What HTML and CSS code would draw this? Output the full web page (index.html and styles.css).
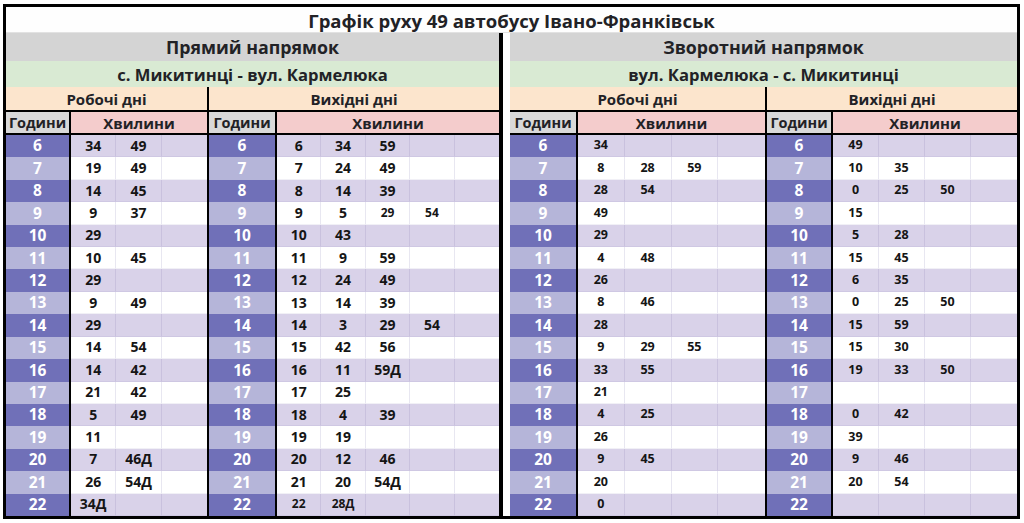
FILE: index.html
```html
<!DOCTYPE html>
<html lang="uk">
<head>
<meta charset="utf-8">
<title>Графік руху 49 автобусу Івано-Франківськ</title>
<link rel="stylesheet" href="styles.css">
</head>
<body>
<div class="sheet">
  <div class="title">Графік руху 49 автобусу Івано-Франківськ</div>
  <div class="panels">
    <section class="panel left">
      <div class="dir">Прямий напрямок</div>
      <div class="route">с. Микитинці - вул. Кармелюка</div>
      <div class="halves">
        <div class="half ha">
          <div class="days">Робочі дні</div>
          <div class="head"><div class="hh">Години</div><div class="mh">Хвилини</div></div>
          <div class="body">
            <div class="r"><span class="h">6</span><span>34</span><span>49</span><span></span></div>
            <div class="r"><span class="h">7</span><span>19</span><span>49</span><span></span></div>
            <div class="r"><span class="h">8</span><span>14</span><span>45</span><span></span></div>
            <div class="r"><span class="h">9</span><span>9</span><span>37</span><span></span></div>
            <div class="r"><span class="h">10</span><span>29</span><span></span><span></span></div>
            <div class="r"><span class="h">11</span><span>10</span><span>45</span><span></span></div>
            <div class="r"><span class="h">12</span><span>29</span><span></span><span></span></div>
            <div class="r"><span class="h">13</span><span>9</span><span>49</span><span></span></div>
            <div class="r"><span class="h">14</span><span>29</span><span></span><span></span></div>
            <div class="r"><span class="h">15</span><span>14</span><span>54</span><span></span></div>
            <div class="r"><span class="h">16</span><span>14</span><span>42</span><span></span></div>
            <div class="r"><span class="h">17</span><span>21</span><span>42</span><span></span></div>
            <div class="r"><span class="h">18</span><span>5</span><span>49</span><span></span></div>
            <div class="r"><span class="h">19</span><span>11</span><span></span><span></span></div>
            <div class="r"><span class="h">20</span><span>7</span><span>46Д</span><span></span></div>
            <div class="r"><span class="h">21</span><span>26</span><span>54Д</span><span></span></div>
            <div class="r"><span class="h">22</span><span>34Д</span><span></span><span></span></div>
          </div>
        </div>
        <div class="half hb">
          <div class="days">Вихідні дні</div>
          <div class="head"><div class="hh">Години</div><div class="mh">Хвилини</div></div>
          <div class="body">
            <div class="r"><span class="h">6</span><span>6</span><span>34</span><span>59</span><span></span><span></span></div>
            <div class="r"><span class="h">7</span><span>7</span><span>24</span><span>49</span><span></span><span></span></div>
            <div class="r"><span class="h">8</span><span>8</span><span>14</span><span>39</span><span></span><span></span></div>
            <div class="r"><span class="h">9</span><span>9</span><span>5</span><span class="s">29</span><span class="s">54</span><span></span></div>
            <div class="r"><span class="h">10</span><span>10</span><span>43</span><span></span><span></span><span></span></div>
            <div class="r"><span class="h">11</span><span>11</span><span>9</span><span>59</span><span></span><span></span></div>
            <div class="r"><span class="h">12</span><span>12</span><span>24</span><span>49</span><span></span><span></span></div>
            <div class="r"><span class="h">13</span><span>13</span><span>14</span><span>39</span><span></span><span></span></div>
            <div class="r"><span class="h">14</span><span>14</span><span>3</span><span>29</span><span>54</span><span></span></div>
            <div class="r"><span class="h">15</span><span>15</span><span>42</span><span>56</span><span></span><span></span></div>
            <div class="r"><span class="h">16</span><span>16</span><span>11</span><span>59Д</span><span></span><span></span></div>
            <div class="r"><span class="h">17</span><span>17</span><span>25</span><span></span><span></span><span></span></div>
            <div class="r"><span class="h">18</span><span>18</span><span>4</span><span>39</span><span></span><span></span></div>
            <div class="r"><span class="h">19</span><span>19</span><span>19</span><span></span><span></span><span></span></div>
            <div class="r"><span class="h">20</span><span>20</span><span>12</span><span>46</span><span></span><span></span></div>
            <div class="r"><span class="h">21</span><span>21</span><span>20</span><span>54Д</span><span></span><span></span></div>
            <div class="r"><span class="h">22</span><span class="s">22</span><span class="s">28Д</span><span></span><span></span><span></span></div>
          </div>
        </div>
      </div>
    </section>
    <section class="panel right">
      <div class="dir">Зворотний напрямок</div>
      <div class="route">вул. Кармелюка - с. Микитинці</div>
      <div class="halves">
        <div class="half hc">
          <div class="days">Робочі дні</div>
          <div class="head"><div class="hh">Години</div><div class="mh">Хвилини</div></div>
          <div class="body">
            <div class="r"><span class="h">6</span><span>34</span><span></span><span></span><span></span></div>
            <div class="r"><span class="h">7</span><span>8</span><span>28</span><span>59</span><span></span></div>
            <div class="r"><span class="h">8</span><span>28</span><span>54</span><span></span><span></span></div>
            <div class="r"><span class="h">9</span><span>49</span><span></span><span></span><span></span></div>
            <div class="r"><span class="h">10</span><span>29</span><span></span><span></span><span></span></div>
            <div class="r"><span class="h">11</span><span>4</span><span>48</span><span></span><span></span></div>
            <div class="r"><span class="h">12</span><span>26</span><span></span><span></span><span></span></div>
            <div class="r"><span class="h">13</span><span>8</span><span>46</span><span></span><span></span></div>
            <div class="r"><span class="h">14</span><span>28</span><span></span><span></span><span></span></div>
            <div class="r"><span class="h">15</span><span>9</span><span>29</span><span>55</span><span></span></div>
            <div class="r"><span class="h">16</span><span>33</span><span>55</span><span></span><span></span></div>
            <div class="r"><span class="h">17</span><span>21</span><span></span><span></span><span></span></div>
            <div class="r"><span class="h">18</span><span>4</span><span>25</span><span></span><span></span></div>
            <div class="r"><span class="h">19</span><span>26</span><span></span><span></span><span></span></div>
            <div class="r"><span class="h">20</span><span>9</span><span>45</span><span></span><span></span></div>
            <div class="r"><span class="h">21</span><span>20</span><span></span><span></span><span></span></div>
            <div class="r"><span class="h">22</span><span>0</span><span></span><span></span><span></span></div>
          </div>
        </div>
        <div class="half hd">
          <div class="days">Вихідні дні</div>
          <div class="head"><div class="hh">Години</div><div class="mh">Хвилини</div></div>
          <div class="body">
            <div class="r"><span class="h">6</span><span>49</span><span></span><span></span><span></span></div>
            <div class="r"><span class="h">7</span><span>10</span><span>35</span><span></span><span></span></div>
            <div class="r"><span class="h">8</span><span>0</span><span>25</span><span>50</span><span></span></div>
            <div class="r"><span class="h">9</span><span>15</span><span></span><span></span><span></span></div>
            <div class="r"><span class="h">10</span><span>5</span><span>28</span><span></span><span></span></div>
            <div class="r"><span class="h">11</span><span>15</span><span>45</span><span></span><span></span></div>
            <div class="r"><span class="h">12</span><span>6</span><span>35</span><span></span><span></span></div>
            <div class="r"><span class="h">13</span><span>0</span><span>25</span><span>50</span><span></span></div>
            <div class="r"><span class="h">14</span><span>15</span><span>59</span><span></span><span></span></div>
            <div class="r"><span class="h">15</span><span>15</span><span>30</span><span></span><span></span></div>
            <div class="r"><span class="h">16</span><span>19</span><span>33</span><span>50</span><span></span></div>
            <div class="r"><span class="h">17</span><span></span><span></span><span></span><span></span></div>
            <div class="r"><span class="h">18</span><span>0</span><span>42</span><span></span><span></span></div>
            <div class="r"><span class="h">19</span><span>39</span><span></span><span></span><span></span></div>
            <div class="r"><span class="h">20</span><span>9</span><span>46</span><span></span><span></span></div>
            <div class="r"><span class="h">21</span><span>20</span><span>54</span><span></span><span></span></div>
            <div class="r"><span class="h">22</span><span></span><span></span><span></span><span></span></div>
          </div>
        </div>
      </div>
    </section>
  </div>
</div>
</body>
</html>
```

FILE: styles.css
```css
* { box-sizing: border-box; }

html, body {
  margin: 0;
  padding: 0;
  background: #ffffff;
}

body {
  padding: 4px 0 0 3px;
  font-family: "Open Sans", "Noto Sans", "DejaVu Sans", sans-serif;
  font-weight: 700;
  color: #222226;
}

.sheet {
  width: 1017px;
  height: 515px;
  border: 3px solid #000;
  display: flex;
  flex-direction: column;
  background: #fff;
}

.title {
  height: 26px;
  flex: none;
  display: flex;
  align-items: center;
  justify-content: center;
  padding-top: 1px;
  font-size: 18.5px;
  background: #fefefe;
  border-bottom: 1px solid #e2e2e2;
}

.panels {
  flex: 1;
  display: flex;
  min-height: 0;
}

.panel {
  display: flex;
  flex-direction: column;
}

.panel.left {
  width: 497px;
  border-right: 4px solid #000;
  margin-right: 7px;
}

.panel.right {
  width: 507px;
}

.dir {
  height: 28px;
  flex: none;
  display: flex;
  align-items: center;
  justify-content: center;
  font-size: 17.8px;
  background: #d4d4d4;
}

.route {
  height: 26px;
  flex: none;
  display: flex;
  align-items: center;
  justify-content: center;
  font-size: 16.6px;
  background: #d9ead3;
}

.halves {
  flex: 1;
  display: flex;
  min-height: 0;
}

.half {
  display: flex;
  flex-direction: column;
  --hw: 65px;
  --n: 3;
}

.ha { width: 203px; border-right: 2px solid #000; --hw: 65px; --n: 3; }
.hb { width: 290px; --hw: 68px; --n: 5; }
.hc { width: 257px; border-right: 2px solid #000; --hw: 68px; --n: 4; }
.hd { width: 250px; --hw: 66px; --n: 4; }

.days {
  height: 25px;
  flex: none;
  display: flex;
  align-items: center;
  justify-content: center;
  font-size: 15px;
  background: #fce5cd;
  border-bottom: 2px solid #000;
}

.head {
  height: 23px;
  flex: none;
  display: flex;
  border-bottom: 2px solid #000;
  font-size: 14.5px;
}

.hh {
  width: var(--hw);
  flex: none;
  display: flex;
  align-items: center;
  justify-content: center;
  background: #d9d9d9;
  border-right: 2px solid #000;
}

.mh {
  flex: 1;
  display: flex;
  align-items: center;
  justify-content: center;
  background: #f4cccc;
  font-size: 15px;
}

.body {
  flex: 1;
  display: grid;
  grid-template-columns: var(--hw) repeat(var(--n), 1fr);
  grid-template-rows: repeat(17, 1fr);
  min-height: 0;
}

.r { display: contents; }

.r > span {
  display: flex;
  align-items: center;
  justify-content: center;
  font-size: 14px;
  color: #151515;
  border-right: 1px solid rgba(120, 110, 170, 0.16);
  border-bottom: 1px solid rgba(120, 110, 170, 0.10);
  line-height: 1;
}

.r > span:last-child { border-right: none; }

.r:nth-child(odd) > span { background: #d9d2e9; }
.r:nth-child(even) > span { background: #ffffff; }

.r > span.h {
  color: #ffffff;
  font-size: 15.5px;
  border-right: 2px solid #000;
  border-bottom: none;
}

.r:nth-child(odd) > span.h { background: #7070b8; }
.r:nth-child(even) > span.h { background: #b5b5d9; }

.r > span.s { font-size: 12px; }

.panel.right .r > span { font-size: 12.5px; }
.panel.right .r > span.h { font-size: 15.5px; }
```
